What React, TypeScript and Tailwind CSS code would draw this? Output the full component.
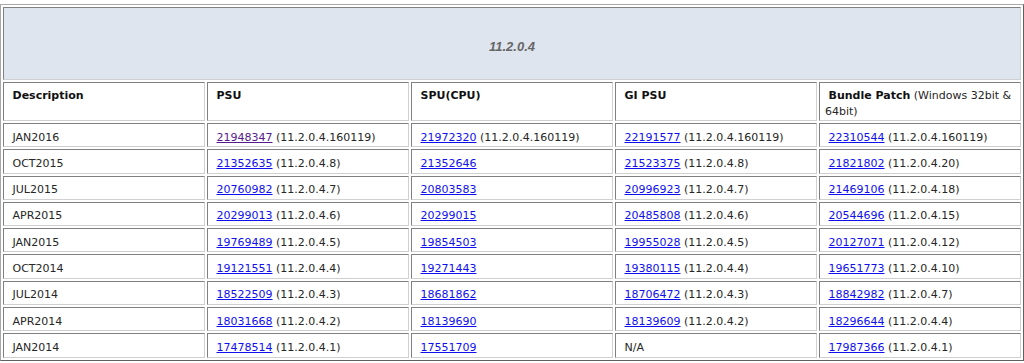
type Cell = { id?: string; ver?: string; visited?: boolean; text?: string };

const rows: { label: string; cells: Cell[] }[] = [
  {
    label: 'JAN2016',
    cells: [
      { id: '21948347', ver: '11.2.0.4.160119', visited: true },
      { id: '21972320', ver: '11.2.0.4.160119' },
      { id: '22191577', ver: '11.2.0.4.160119' },
      { id: '22310544', ver: '11.2.0.4.160119' },
    ],
  },
  {
    label: 'OCT2015',
    cells: [
      { id: '21352635', ver: '11.2.0.4.8' },
      { id: '21352646' },
      { id: '21523375', ver: '11.2.0.4.8' },
      { id: '21821802', ver: '11.2.0.4.20' },
    ],
  },
  {
    label: 'JUL2015',
    cells: [
      { id: '20760982', ver: '11.2.0.4.7' },
      { id: '20803583' },
      { id: '20996923', ver: '11.2.0.4.7' },
      { id: '21469106', ver: '11.2.0.4.18' },
    ],
  },
  {
    label: 'APR2015',
    cells: [
      { id: '20299013', ver: '11.2.0.4.6' },
      { id: '20299015' },
      { id: '20485808', ver: '11.2.0.4.6' },
      { id: '20544696', ver: '11.2.0.4.15' },
    ],
  },
  {
    label: 'JAN2015',
    cells: [
      { id: '19769489', ver: '11.2.0.4.5' },
      { id: '19854503' },
      { id: '19955028', ver: '11.2.0.4.5' },
      { id: '20127071', ver: '11.2.0.4.12' },
    ],
  },
  {
    label: 'OCT2014',
    cells: [
      { id: '19121551', ver: '11.2.0.4.4' },
      { id: '19271443' },
      { id: '19380115', ver: '11.2.0.4.4' },
      { id: '19651773', ver: '11.2.0.4.10' },
    ],
  },
  {
    label: 'JUL2014',
    cells: [
      { id: '18522509', ver: '11.2.0.4.3' },
      { id: '18681862' },
      { id: '18706472', ver: '11.2.0.4.3' },
      { id: '18842982', ver: '11.2.0.4.7' },
    ],
  },
  {
    label: 'APR2014',
    cells: [
      { id: '18031668', ver: '11.2.0.4.2' },
      { id: '18139690' },
      { id: '18139609', ver: '11.2.0.4.2' },
      { id: '18296644', ver: '11.2.0.4.4' },
    ],
  },
  {
    label: 'JAN2014',
    cells: [
      { id: '17478514', ver: '11.2.0.4.1' },
      { id: '17551709' },
      { text: 'N/A' },
      { id: '17987366', ver: '11.2.0.4.1' },
    ],
  },
];

// inset cell border, like an old border="1" table
const cellBorder =
  'border border-t-[#808080] border-l-[#808080] border-b-[#d0d0d0] border-r-[#d0d0d0]';

function PatchCell({ cell }: { cell: Cell }) {
  if (cell.text) return <>{cell.text}</>;
  return (
    <>
      <a
        href="#"
        className={cell.visited ? 'underline text-[#551a8b]' : 'underline text-[#1010ee]'}
      >
        {cell.id}
      </a>
      {cell.ver && <> ({cell.ver})</>}
    </>
  );
}

export default function App() {
  return (
    <div className="bg-white w-[1024px] h-[363px] overflow-hidden pt-[4px] font-['DejaVu_Sans',sans-serif] text-[11px] text-[#262626]">
      <table className="w-[1024px] table-fixed border-separate border-spacing-[2px] border border-t-[#a8a8a8] border-l-[#a8a8a8] border-b-[#606060] border-r-[#606060]">
        <tbody>
          <tr>
            <td
              colSpan={5}
              className={`${cellBorder} bg-[#dfe5ee] text-center pt-[7px] pb-0 leading-[64px] font-['Liberation_Sans',sans-serif] text-[13px] font-bold italic text-[#666]`}
            >
              11.2.0.4
            </td>
          </tr>
          <tr className="text-[#111]">
            {['Description', 'PSU', 'SPU(CPU)', 'GI PSU'].map((h) => (
              <th
                key={h}
                className={`${cellBorder} text-left align-top font-bold pl-[8.5px] pr-[5px] pt-[5px] pb-0 leading-[16px]`}
              >
                {h}
              </th>
            ))}
            <th
              className={`${cellBorder} text-left align-top font-normal pl-[5px] pr-[5px] pt-[5px] pb-0 leading-[16px]`}
            >
              <span className="ml-[3.5px] font-bold">Bundle Patch</span>
              <span className="text-[#262626]"> (Windows 32bit &amp; 64bit)</span>
            </th>
          </tr>
          {rows.map((r) => (
            <tr key={r.label}>
              <td className={`${cellBorder} pl-[8.5px] pr-[5px] pt-[5.5px] pb-[0.8px] leading-[16px]`}>
                {r.label}
              </td>
              {r.cells.map((c, i) => (
                <td
                  key={i}
                  className={`${cellBorder} pl-[8.5px] pr-[5px] pt-[5.5px] pb-[0.8px] leading-[16px] whitespace-nowrap`}
                >
                  <PatchCell cell={c} />
                </td>
              ))}
            </tr>
          ))}
        </tbody>
      </table>
    </div>
  );
}
